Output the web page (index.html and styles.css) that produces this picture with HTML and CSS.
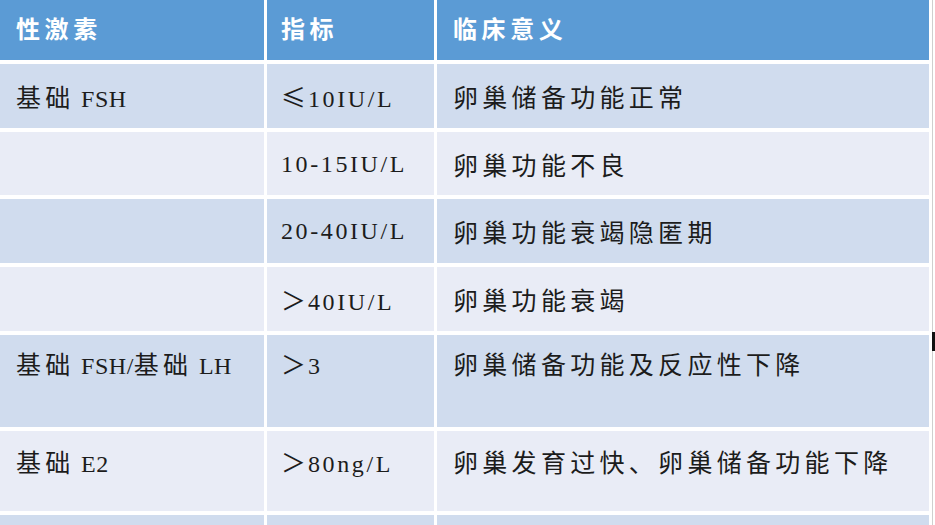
FILE: index.html
```html
<!DOCTYPE html>
<html lang="zh-CN">
<head>
<meta charset="utf-8">
<title>性激素</title>
<link rel="stylesheet" href="styles.css">
</head>
<body>
<div class="page">
  <div class="table">
    <div class="cell head c1">性激素</div>
    <div class="cell head c2">指标</div>
    <div class="cell head c3">临床意义</div>

    <div class="cell odd c1"><span class="cjk">基础</span> FSH</div>
    <div class="cell odd c2"><span class="sym">≤</span>10IU/L</div>
    <div class="cell odd c3 cjk">卵巢储备功能正常</div>

    <div class="cell even c1"></div>
    <div class="cell even c2">10-15IU/L</div>
    <div class="cell even c3 cjk">卵巢功能不良</div>

    <div class="cell odd c1"></div>
    <div class="cell odd c2">20-40IU/L</div>
    <div class="cell odd c3 cjk">卵巢功能衰竭隐匿期</div>

    <div class="cell even c1"></div>
    <div class="cell even c2"><span class="sym">＞</span>40IU/L</div>
    <div class="cell even c3 cjk">卵巢功能衰竭</div>

    <div class="cell odd tall5 c1"><span class="cjk">基础</span> FSH/<span class="cjk">基础</span> LH</div>
    <div class="cell odd tall5 c2"><span class="sym">＞</span>3</div>
    <div class="cell odd tall5 c3 cjk">卵巢储备功能及反应性下降</div>

    <div class="cell even tall6 c1"><span class="cjk">基础</span> E2</div>
    <div class="cell even tall6 c2"><span class="sym">＞</span>80ng/L</div>
    <div class="cell even tall6 c3 cjk">卵巢发育过快、卵巢储备功能下降</div>

    <div class="cell odd c1"></div>
    <div class="cell odd c2"></div>
    <div class="cell odd c3"></div>
  </div>
  <div class="edge"></div>
  <div class="marker"></div>
</div>
</body>
</html>
```

FILE: styles.css
```css
html, body {
  margin: 0;
  padding: 0;
  background: #ffffff;
  overflow: hidden;
}

.page {
  position: relative;
  display: flex;
  width: 935px;
  height: 525px;
  overflow: hidden;
}

.table {
  display: grid;
  grid-template-columns: 264px 167px 492px;
  grid-template-rows: 60px 64px 63px 64px 64px 92px 80px 40px;
  column-gap: 3px;
  row-gap: 4px;
  width: 929px;
  flex: none;
}

.cell {
  box-sizing: border-box;
  padding-left: 16px;
  padding-top: 16px;
  font-family: "Liberation Serif", "Noto Sans CJK SC", serif;
  font-size: 24px;
  line-height: 32px;
  letter-spacing: 0.5px;
  color: #1c1c1c;
  white-space: nowrap;
}

.c2 {
  padding-left: 14px;
  letter-spacing: 2.6px;
}

.cell .cjk,
.cell.cjk {
  font-family: "Noto Sans CJK SC", sans-serif;
  font-size: 25px;
  letter-spacing: 4.3px;
}

.cell .sym {
  font-family: "Noto Sans CJK SC", sans-serif;
  font-size: 25px;
  letter-spacing: 2px;
}

.head {
  display: flex;
  align-items: center;
  padding-top: 0;
  padding-bottom: 4px;
  background: #5b9bd5;
  color: #ffffff;
  font-family: "Noto Sans CJK SC", sans-serif;
  font-weight: 700;
  font-size: 24px;
  letter-spacing: 4.6px;
}

.head.c2 {
  padding-left: 14px;
}

.odd {
  background: #d0dcee;
}

.even {
  background: #e9ecf6;
}

.tall5 {
  padding-top: 12px;
}

.tall6 {
  padding-top: 14px;
}

.edge {
  width: 1px;
  margin-left: 3px;
  background: #cfcfcf;
  flex: none;
}

.marker {
  position: absolute;
  left: 932px;
  top: 332px;
  width: 3px;
  height: 19px;
  background: #111111;
}
```
